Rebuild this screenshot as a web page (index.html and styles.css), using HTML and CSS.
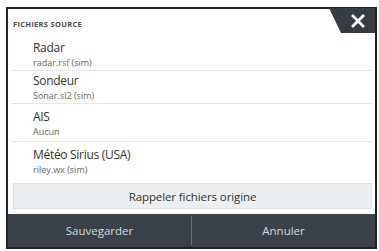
FILE: index.html
```html
<!DOCTYPE html>
<html>
<head>
<meta charset="utf-8">
<link rel="stylesheet" href="styles.css">
</head>
<body>
<div class="dialog">
  <div class="header">
    <span class="title">FICHIERS SOURCE</span>
    <div class="close">
      <svg width="14" height="14" viewBox="0 0 14 14"><path d="M2 2 L12 12 M12 2 L2 12" stroke="#fff" stroke-width="2.8" stroke-linecap="square"/></svg>
    </div>
  </div>
  <div class="list">
    <div class="row r1"><div class="name">Radar</div><div class="sub">radar.rsf (sim)</div></div>
    <div class="row r2"><div class="name">Sondeur</div><div class="sub">Sonar.sl2 (sim)</div></div>
    <div class="row r3"><div class="name">AIS</div><div class="sub">Aucun</div></div>
    <div class="row r4"><div class="name">Météo Sirius (USA)</div><div class="sub">riley.wx (sim)</div></div>
  </div>
  <div class="restore">Rappeler fichiers origine</div>
  <div class="footer">
    <div class="fbtn">Sauvegarder</div>
    <div class="fdiv"></div>
    <div class="fbtn">Annuler</div>
  </div>
</div>
</body>
</html>
```
FILE: styles.css
```css
html, body {
  margin: 0;
  padding: 0;
  background: #fff;
  width: 379px;
  height: 251px;
  overflow: hidden;
}
.dialog {
  position: relative;
  box-sizing: border-box;
  margin: 7px 0 0 6px;
  width: 371px;
  height: 242px;
  border: 2px solid #1f2226;
  background: #fff;
  display: flex;
  flex-direction: column;
  font-family: "Open Sans", "Liberation Sans", sans-serif;
}
.header {
  height: 28px;
  display: flex;
  align-items: center;
  padding-left: 5px;
}
.title {
  font-size: 7.5px;
  font-weight: 700;
  color: #4a4a4a;
  letter-spacing: 0.3px;
  margin-top: 1px;
}
.close {
  position: absolute;
  top: -1px;
  right: 0;
  width: 46px;
  height: 25px;
  background: #363c44;
  clip-path: polygon(0 0, 100% 0, 100% 100%, 12px 100%);
  display: flex;
  align-items: center;
  justify-content: center;
  padding-left: 12px;
  box-sizing: border-box;
}
.list {
  display: flex;
  flex-direction: column;
  margin: 0 3px;
}
.row {
  box-sizing: border-box;
  padding-left: 22px;
  display: flex;
  flex-direction: column;
  justify-content: center;
  border-bottom: 1px solid #e4e6e8;
}
.r1 { height: 34px; }
.r2 { height: 33px; }
.r3 { height: 38px; }
.r4 { height: 37px; border-bottom: none; }
.name {
  font-size: 12px;
  font-weight: 500;
  color: #333;
  line-height: 17px;
  letter-spacing: -0.3px;
}
.sub {
  font-size: 9px;
  color: #666;
  line-height: 13px;
}
.restore {
  margin: 4px 3px 0 5px;
  height: 26px;
  box-sizing: border-box;
  background: #eceff2;
  border: 1px solid #dde0e4;
  display: flex;
  align-items: center;
  justify-content: center;
  font-size: 11.5px;
  color: #333;
  letter-spacing: -0.1px;
}
.footer {
  margin-top: auto;
  height: 33px;
  background: #3a4149;
  display: flex;
  align-items: stretch;
}
.fbtn {
  flex: 1;
  display: flex;
  align-items: center;
  justify-content: center;
  color: #d3d8dc;
  font-size: 11.5px;
}
.fdiv {
  width: 1px;
  background: #66707a;
  margin: 2px 0;
}
```
